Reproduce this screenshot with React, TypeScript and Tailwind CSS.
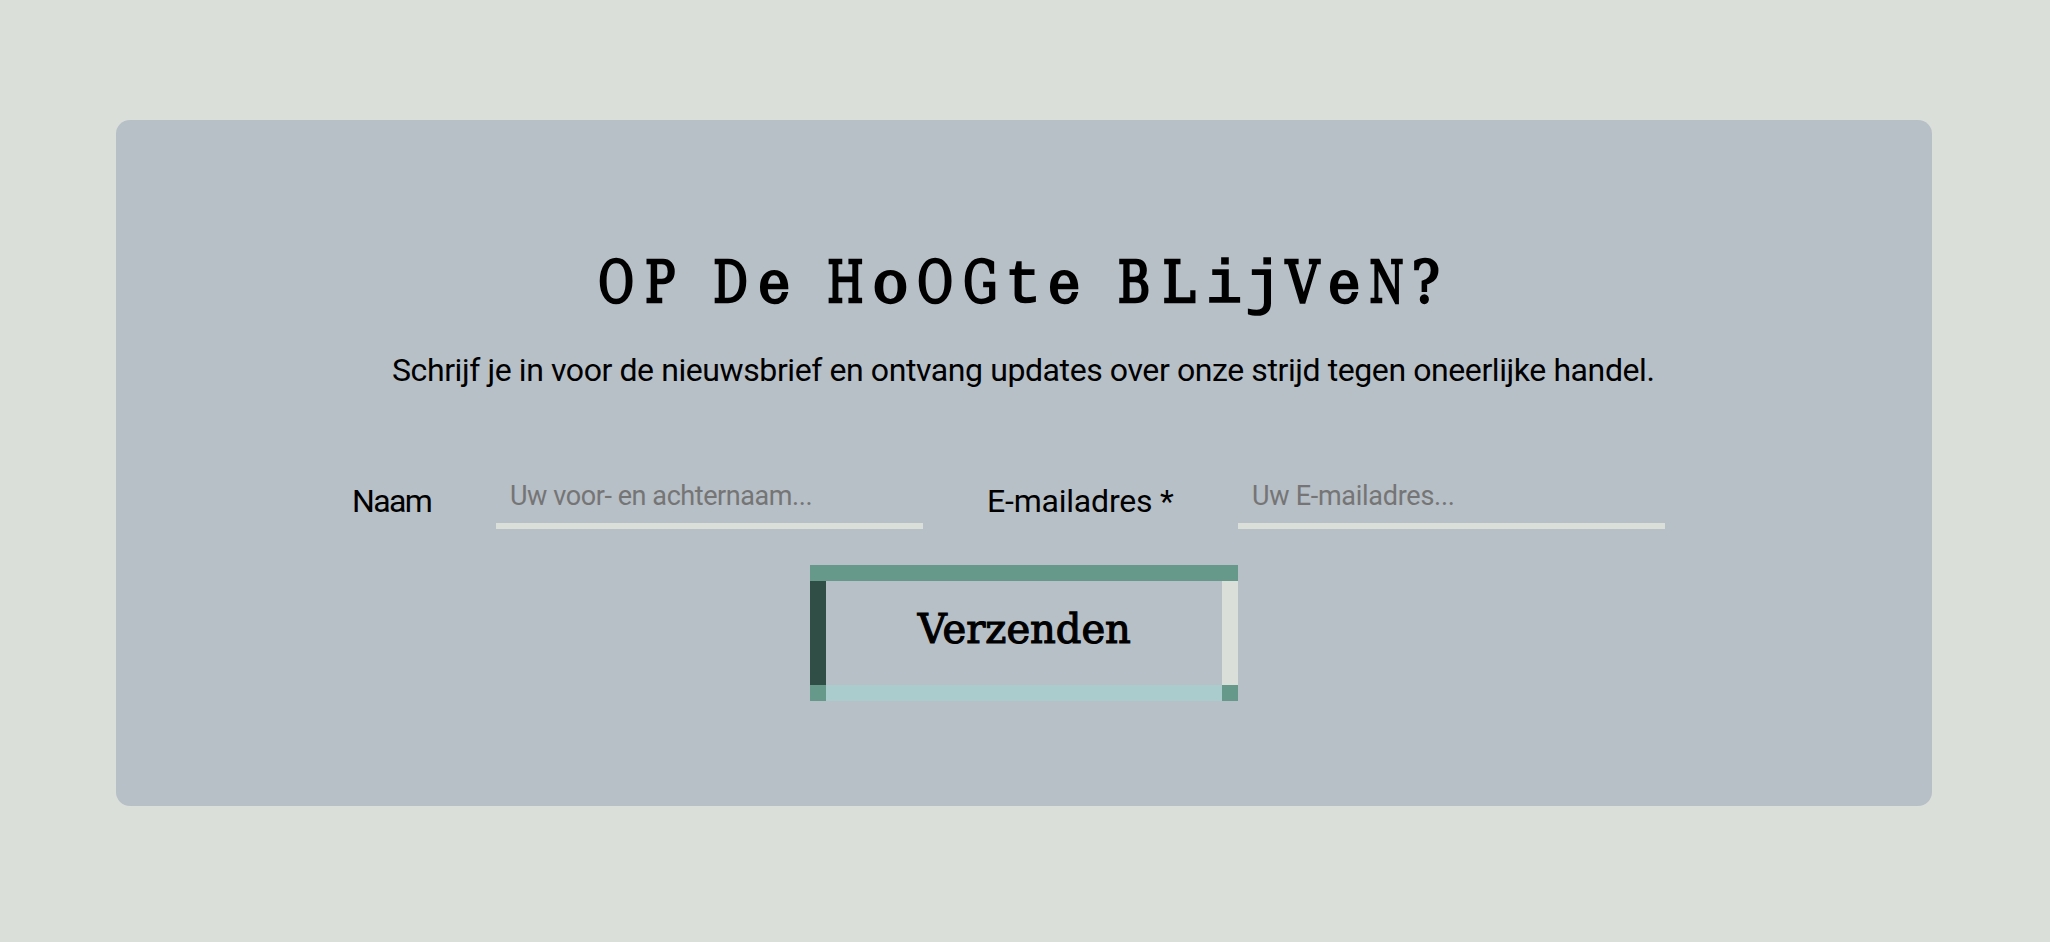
import React from "react";

const serif = "font-['DejaVu_Serif_Condensed','DejaVu_Serif',serif]";
const mono = "font-['Liberation_Mono',monospace] text-[61px] [-webkit-text-stroke:1.7px_black]";

type Glyph = { c: string; cell: string; shape: string };

const title: Glyph[] = [
  { c: "O", cell: "w-[44px]", shape: `${serif} scale-x-[0.85]` },
  { c: "P", cell: "w-[44px]", shape: `${serif} scale-x-[0.88]` },
  { c: " ", cell: "w-[26px]", shape: serif },
  { c: "D", cell: "w-[45px]", shape: `${serif} scale-x-[0.84]` },
  { c: "e", cell: "w-[42px]", shape: `${serif} scale-x-[1.03]` },
  { c: " ", cell: "w-[29px]", shape: serif },
  { c: "H", cell: "w-[43px]", shape: `${serif} scale-x-[0.81]` },
  { c: "o", cell: "w-[46px]", shape: `${serif} scale-x-[1.13]` },
  { c: "O", cell: "w-[45px]", shape: `${serif} scale-x-[0.85]` },
  { c: "G", cell: "w-[45px]", shape: `${serif} scale-x-[0.84]` },
  { c: "t", cell: "w-[40px]", shape: mono },
  { c: "e", cell: "w-[42px]", shape: `${serif} scale-x-[1.03]` },
  { c: " ", cell: "w-[27px]", shape: serif },
  { c: "B", cell: "w-[44px]", shape: `${serif} scale-x-[0.86]` },
  { c: "L", cell: "w-[46px]", shape: `${serif} scale-x-[0.97]` },
  { c: "i", cell: "w-[44px]", shape: mono },
  { c: "j", cell: "w-[35px]", shape: mono },
  { c: "V", cell: "w-[44px]", shape: `${serif} scale-x-[0.9]` },
  { c: "e", cell: "w-[39px]", shape: `${serif} scale-x-[1.03]` },
  { c: "N", cell: "w-[44px]", shape: `${serif} scale-x-[0.76]` },
  { c: "?", cell: "w-[36px]", shape: `${serif} scale-x-[1.02]` },
];

function Title() {
  return (
    <h2 className="mt-[122px] ml-[478px] flex h-[80px] items-baseline text-[57px] leading-[80px] [-webkit-text-stroke:2.3px_black]">
      {title.map((g, i) => (
        <span key={i} className={`flex shrink-0 justify-center whitespace-pre ${g.cell}`}>
          <span className={`inline-block leading-[80px] ${g.shape}`}>{g.c}</span>
        </span>
      ))}
    </h2>
  );
}

const input =
  "h-[66px] w-[427px] shrink-0 rounded-none border-b-[6px] border-[#dadfd9] bg-transparent px-[14px] pt-[5px] text-[27px] outline-none placeholder:text-[#757575] placeholder:opacity-100";

export default function App() {
  return (
    <main className="h-[942px] w-[2050px] bg-[#dadfd9] pt-[120px] pl-[116px] font-[Roboto,sans-serif] text-black">
      <section className="flex h-[686px] w-[1816px] flex-col overflow-hidden rounded-[14px] bg-[#b7bfc7]">
        <Title />
        <p className="mt-[26px] ml-[276px] h-[44px] text-[32px] leading-[44px] tracking-[-0.41px] whitespace-nowrap">
          Schrijf je in voor de nieuwsbrief en ontvang updates over onze strijd tegen oneerlijke handel.
        </p>
        <form className="mt-[71px] flex flex-col">
          <div className="flex pl-[236px]">
            <label htmlFor="name" className="w-[144px] pt-[16px] text-[32px] leading-[44px] tracking-[-1.6px]">Naam</label>
            <input id="name" className={`${input} tracking-[-0.42px]`} placeholder="Uw voor- en achternaam..." />
            <label htmlFor="email" className="ml-[64px] w-[251px] pt-[16px] text-[32px] leading-[44px] tracking-[-0.2px] whitespace-nowrap">E-mailadres *</label>
            <input id="email" className={`${input} tracking-[-0.27px]`} placeholder="Uw E-mailadres..." />
          </div>
          <button
            type="button"
            className="mt-[36px] ml-[694px] grid h-[136px] w-[428px] grid-cols-[16px_396px_16px] grid-rows-[16px_104px_16px] bg-[#66998a]"
          >
            <span className="col-start-1 row-start-2 h-full bg-[#304d46]" />
            <span className="col-start-2 row-start-2 h-full bg-[#b7bfc7] pt-[18px] font-['DejaVu_Serif_Condensed','DejaVu_Serif',serif] text-[41px] leading-[60px] [-webkit-text-stroke:1.1px_black]">
              <span className="inline-block scale-x-[1.085]">Verzenden</span>
            </span>
            <span className="col-start-3 row-start-2 h-full bg-[#dadfd9]" />
            <span className="col-start-2 row-start-3 h-full bg-[#aacccc]" />
          </button>
        </form>
      </section>
    </main>
  );
}
